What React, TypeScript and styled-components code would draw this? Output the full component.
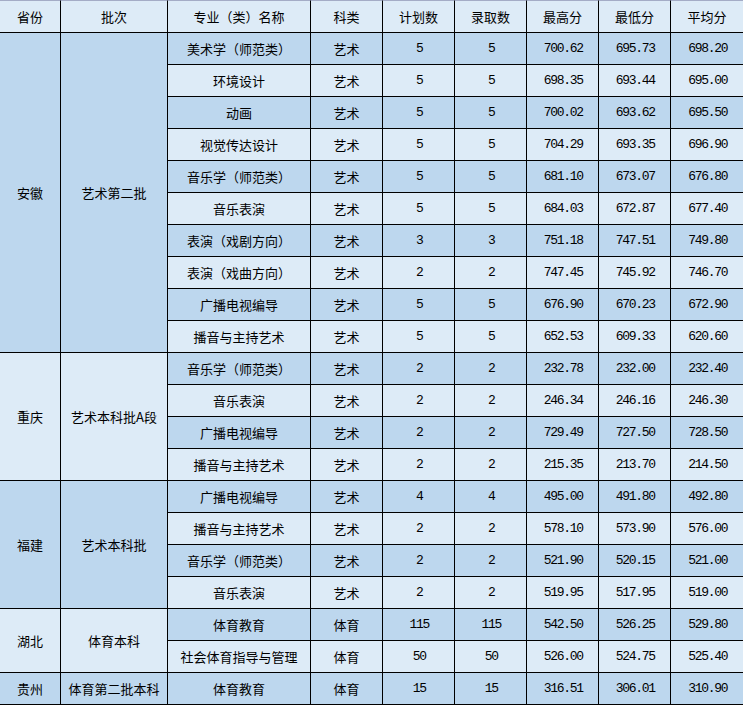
import React from 'react';
import styled, { createGlobalStyle } from 'styled-components';

const GlobalStyle = createGlobalStyle`
  html, body {
    margin: 0;
    padding: 0;
    background: #ffffff;
  }
`;

const colors = {
  dark: '#bdd7ee',
  light: '#ddebf7',
  line: '#000000',
  topLine: '#a4acc6',
};

const Table = styled.div`
  display: grid;
  grid-template-columns: 61px 107px 143px 72px 72px 72px 72px 72px 72px;
  grid-template-rows: 33px;
  grid-auto-rows: 32px;
  width: 743px;
  font-family: 'Noto Sans CJK SC', 'Noto Sans', sans-serif;
  font-size: 13px;
  color: #000;
`;

const Cell = styled.div<{ $shade: 'dark' | 'light'; $span?: number; $last?: boolean }>`
  box-sizing: border-box;
  display: flex;
  align-items: center;
  justify-content: center;
  white-space: nowrap;
  background: ${(p) => colors[p.$shade]};
  border-bottom: 1px solid ${colors.line};
  border-right: ${(p) => (p.$last ? 'none' : `1px solid ${colors.line}`)};
  grid-row: ${(p) => (p.$span ? `span ${p.$span}` : 'auto')};
`;

const HeadCell = styled(Cell)`
  border-top: 1px solid ${colors.topLine};
`;

const Num = styled.span`
  font-family: 'Liberation Mono', 'DejaVu Sans Mono', monospace;
  font-size: 13px;
  letter-spacing: -1.3px;
  margin-right: -1.3px;
`;

type Row = [string, string, string, string, string, string, string];

type Group = {
  province: string;
  batch: string;
  rows: Row[];
};

const headers = ['省份', '批次', '专业（类）名称', '科类', '计划数', '录取数', '最高分', '最低分', '平均分'];

const groups: Group[] = [
  {
    province: '安徽',
    batch: '艺术第二批',
    rows: [
      ['美术学（师范类）', '艺术', '5', '5', '700.62', '695.73', '698.20'],
      ['环境设计', '艺术', '5', '5', '698.35', '693.44', '695.00'],
      ['动画', '艺术', '5', '5', '700.02', '693.62', '695.50'],
      ['视觉传达设计', '艺术', '5', '5', '704.29', '693.35', '696.90'],
      ['音乐学（师范类）', '艺术', '5', '5', '681.10', '673.07', '676.80'],
      ['音乐表演', '艺术', '5', '5', '684.03', '672.87', '677.40'],
      ['表演（戏剧方向）', '艺术', '3', '3', '751.18', '747.51', '749.80'],
      ['表演（戏曲方向）', '艺术', '2', '2', '747.45', '745.92', '746.70'],
      ['广播电视编导', '艺术', '5', '5', '676.90', '670.23', '672.90'],
      ['播音与主持艺术', '艺术', '5', '5', '652.53', '609.33', '620.60'],
    ],
  },
  {
    province: '重庆',
    batch: '艺术本科批A段',
    rows: [
      ['音乐学（师范类）', '艺术', '2', '2', '232.78', '232.00', '232.40'],
      ['音乐表演', '艺术', '2', '2', '246.34', '246.16', '246.30'],
      ['广播电视编导', '艺术', '2', '2', '729.49', '727.50', '728.50'],
      ['播音与主持艺术', '艺术', '2', '2', '215.35', '213.70', '214.50'],
    ],
  },
  {
    province: '福建',
    batch: '艺术本科批',
    rows: [
      ['广播电视编导', '艺术', '4', '4', '495.00', '491.80', '492.80'],
      ['播音与主持艺术', '艺术', '2', '2', '578.10', '573.90', '576.00'],
      ['音乐学（师范类）', '艺术', '2', '2', '521.90', '520.15', '521.00'],
      ['音乐表演', '艺术', '2', '2', '519.95', '517.95', '519.00'],
    ],
  },
  {
    province: '湖北',
    batch: '体育本科',
    rows: [
      ['体育教育', '体育', '115', '115', '542.50', '526.25', '529.80'],
      ['社会体育指导与管理', '体育', '50', '50', '526.00', '524.75', '525.40'],
    ],
  },
  {
    province: '贵州',
    batch: '体育第二批本科',
    rows: [['体育教育', '体育', '15', '15', '316.51', '306.01', '310.90']],
  },
];

const App = (): JSX.Element => {
  let rowIndex = 0;
  return (
    <>
      <GlobalStyle />
      <Table>
        {headers.map((h, i) => (
          <HeadCell key={h} $shade="light" $last={i === headers.length - 1}>
            {h}
          </HeadCell>
        ))}
        {groups.map((g, gi) => {
          const groupShade = gi % 2 === 0 ? 'dark' : 'light';
          return (
            <React.Fragment key={g.province}>
              <Cell $shade={groupShade} $span={g.rows.length}>
                {g.province}
              </Cell>
              <Cell $shade={groupShade} $span={g.rows.length}>
                {g.batch}
              </Cell>
              {g.rows.map((r) => {
                const shade = rowIndex % 2 === 0 ? 'dark' : 'light';
                rowIndex += 1;
                return r.map((v, ci) => (
                  <Cell key={`${rowIndex}-${ci}`} $shade={shade} $last={ci === r.length - 1}>
                    {ci >= 2 ? <Num>{v}</Num> : v}
                  </Cell>
                ));
              })}
            </React.Fragment>
          );
        })}
      </Table>
    </>
  );
};

export default App;
